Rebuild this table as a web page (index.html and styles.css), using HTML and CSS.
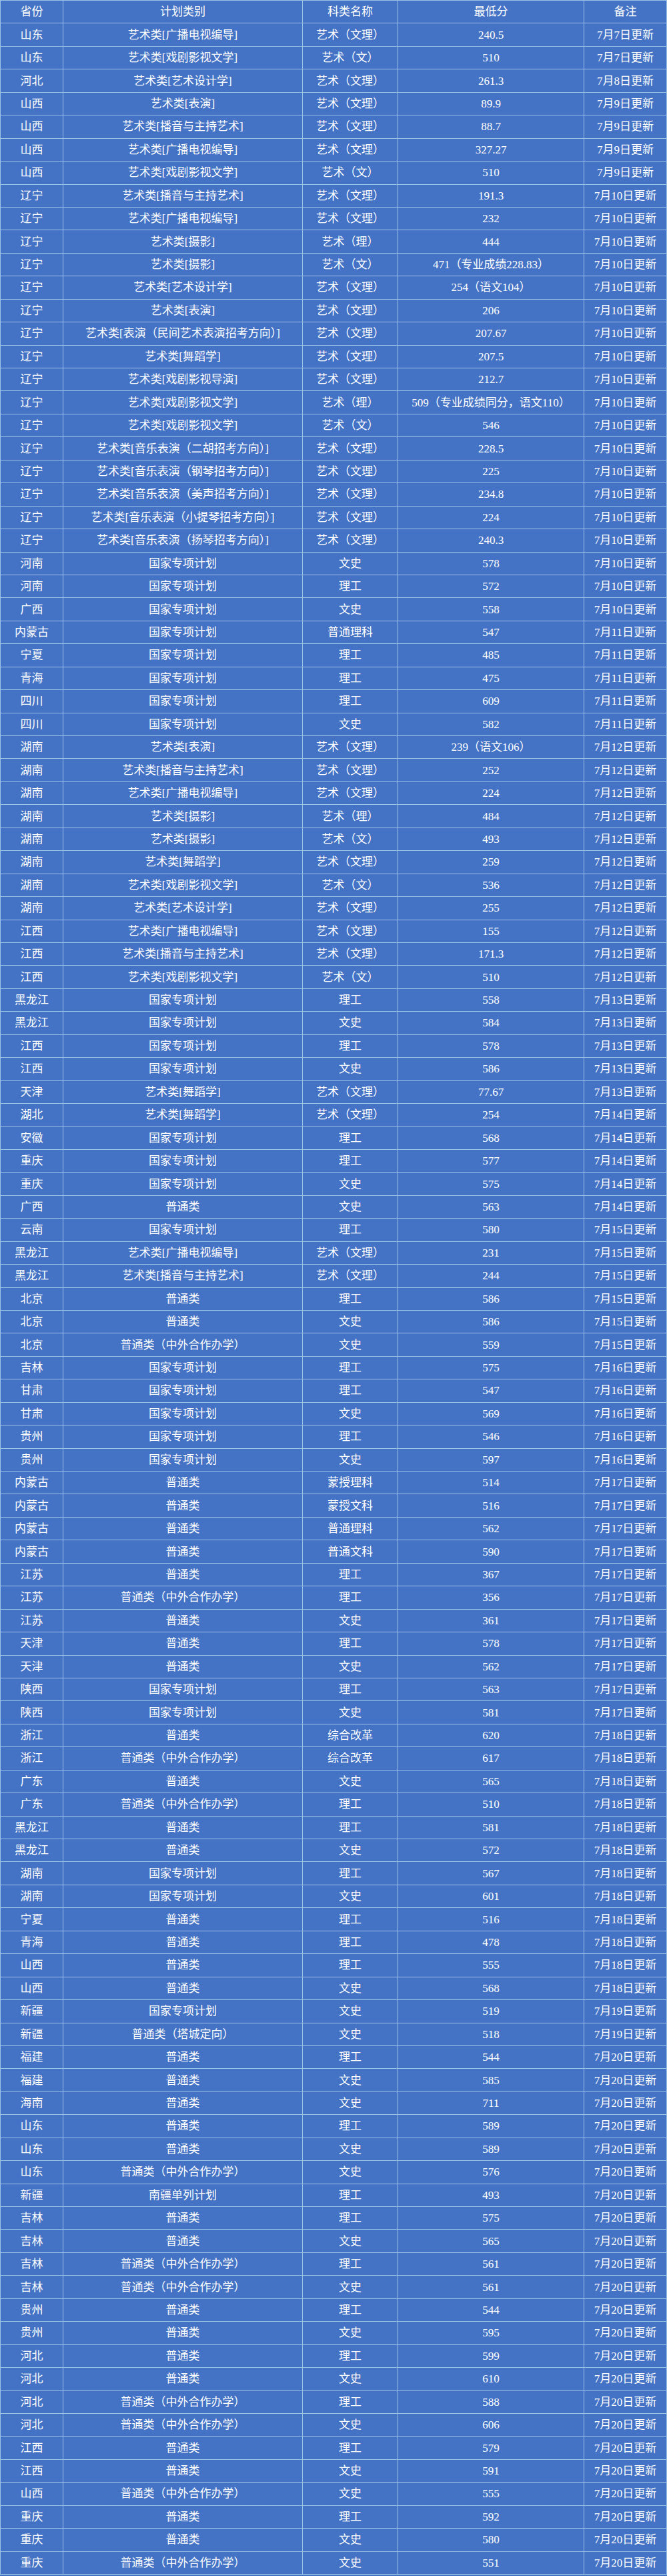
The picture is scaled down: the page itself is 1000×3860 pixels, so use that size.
FILE: index.html
```html
<!DOCTYPE html>
<html lang="zh-CN">
<head>
<meta charset="utf-8">
<title>录取分数线</title>
<link rel="stylesheet" href="styles.css">
</head>
<body>
<table class="scores">
<colgroup>
<col class="c-prov"><col class="c-plan"><col class="c-kind"><col class="c-min"><col class="c-note">
</colgroup>
<thead>
<tr><th>省份</th><th>计划类别</th><th>科类名称</th><th>最低分</th><th>备注</th></tr>
</thead>
<tbody>
<tr><td>山东</td><td>艺术类[广播电视编导]</td><td>艺术（文理）</td><td>240.5</td><td>7月7日更新</td></tr>
<tr><td>山东</td><td>艺术类[戏剧影视文学]</td><td>艺术（文）</td><td>510</td><td>7月7日更新</td></tr>
<tr><td>河北</td><td>艺术类[艺术设计学]</td><td>艺术（文理）</td><td>261.3</td><td>7月8日更新</td></tr>
<tr><td>山西</td><td>艺术类[表演]</td><td>艺术（文理）</td><td>89.9</td><td>7月9日更新</td></tr>
<tr><td>山西</td><td>艺术类[播音与主持艺术]</td><td>艺术（文理）</td><td>88.7</td><td>7月9日更新</td></tr>
<tr><td>山西</td><td>艺术类[广播电视编导]</td><td>艺术（文理）</td><td>327.27</td><td>7月9日更新</td></tr>
<tr><td>山西</td><td>艺术类[戏剧影视文学]</td><td>艺术（文）</td><td>510</td><td>7月9日更新</td></tr>
<tr><td>辽宁</td><td>艺术类[播音与主持艺术]</td><td>艺术（文理）</td><td>191.3</td><td>7月10日更新</td></tr>
<tr><td>辽宁</td><td>艺术类[广播电视编导]</td><td>艺术（文理）</td><td>232</td><td>7月10日更新</td></tr>
<tr><td>辽宁</td><td>艺术类[摄影]</td><td>艺术（理）</td><td>444</td><td>7月10日更新</td></tr>
<tr><td>辽宁</td><td>艺术类[摄影]</td><td>艺术（文）</td><td>471（专业成绩228.83）</td><td>7月10日更新</td></tr>
<tr><td>辽宁</td><td>艺术类[艺术设计学]</td><td>艺术（文理）</td><td>254（语文104）</td><td>7月10日更新</td></tr>
<tr><td>辽宁</td><td>艺术类[表演]</td><td>艺术（文理）</td><td>206</td><td>7月10日更新</td></tr>
<tr><td>辽宁</td><td>艺术类[表演（民间艺术表演招考方向）]</td><td>艺术（文理）</td><td>207.67</td><td>7月10日更新</td></tr>
<tr><td>辽宁</td><td>艺术类[舞蹈学]</td><td>艺术（文理）</td><td>207.5</td><td>7月10日更新</td></tr>
<tr><td>辽宁</td><td>艺术类[戏剧影视导演]</td><td>艺术（文理）</td><td>212.7</td><td>7月10日更新</td></tr>
<tr><td>辽宁</td><td>艺术类[戏剧影视文学]</td><td>艺术（理）</td><td>509（专业成绩同分，语文110）</td><td>7月10日更新</td></tr>
<tr><td>辽宁</td><td>艺术类[戏剧影视文学]</td><td>艺术（文）</td><td>546</td><td>7月10日更新</td></tr>
<tr><td>辽宁</td><td>艺术类[音乐表演（二胡招考方向）]</td><td>艺术（文理）</td><td>228.5</td><td>7月10日更新</td></tr>
<tr><td>辽宁</td><td>艺术类[音乐表演（钢琴招考方向）]</td><td>艺术（文理）</td><td>225</td><td>7月10日更新</td></tr>
<tr><td>辽宁</td><td>艺术类[音乐表演（美声招考方向）]</td><td>艺术（文理）</td><td>234.8</td><td>7月10日更新</td></tr>
<tr><td>辽宁</td><td>艺术类[音乐表演（小提琴招考方向）]</td><td>艺术（文理）</td><td>224</td><td>7月10日更新</td></tr>
<tr><td>辽宁</td><td>艺术类[音乐表演（扬琴招考方向）]</td><td>艺术（文理）</td><td>240.3</td><td>7月10日更新</td></tr>
<tr><td>河南</td><td>国家专项计划</td><td>文史</td><td>578</td><td>7月10日更新</td></tr>
<tr><td>河南</td><td>国家专项计划</td><td>理工</td><td>572</td><td>7月10日更新</td></tr>
<tr><td>广西</td><td>国家专项计划</td><td>文史</td><td>558</td><td>7月10日更新</td></tr>
<tr><td>内蒙古</td><td>国家专项计划</td><td>普通理科</td><td>547</td><td>7月11日更新</td></tr>
<tr><td>宁夏</td><td>国家专项计划</td><td>理工</td><td>485</td><td>7月11日更新</td></tr>
<tr><td>青海</td><td>国家专项计划</td><td>理工</td><td>475</td><td>7月11日更新</td></tr>
<tr><td>四川</td><td>国家专项计划</td><td>理工</td><td>609</td><td>7月11日更新</td></tr>
<tr><td>四川</td><td>国家专项计划</td><td>文史</td><td>582</td><td>7月11日更新</td></tr>
<tr><td>湖南</td><td>艺术类[表演]</td><td>艺术（文理）</td><td>239（语文106）</td><td>7月12日更新</td></tr>
<tr><td>湖南</td><td>艺术类[播音与主持艺术]</td><td>艺术（文理）</td><td>252</td><td>7月12日更新</td></tr>
<tr><td>湖南</td><td>艺术类[广播电视编导]</td><td>艺术（文理）</td><td>224</td><td>7月12日更新</td></tr>
<tr><td>湖南</td><td>艺术类[摄影]</td><td>艺术（理）</td><td>484</td><td>7月12日更新</td></tr>
<tr><td>湖南</td><td>艺术类[摄影]</td><td>艺术（文）</td><td>493</td><td>7月12日更新</td></tr>
<tr><td>湖南</td><td>艺术类[舞蹈学]</td><td>艺术（文理）</td><td>259</td><td>7月12日更新</td></tr>
<tr><td>湖南</td><td>艺术类[戏剧影视文学]</td><td>艺术（文）</td><td>536</td><td>7月12日更新</td></tr>
<tr><td>湖南</td><td>艺术类[艺术设计学]</td><td>艺术（文理）</td><td>255</td><td>7月12日更新</td></tr>
<tr><td>江西</td><td>艺术类[广播电视编导]</td><td>艺术（文理）</td><td>155</td><td>7月12日更新</td></tr>
<tr><td>江西</td><td>艺术类[播音与主持艺术]</td><td>艺术（文理）</td><td>171.3</td><td>7月12日更新</td></tr>
<tr><td>江西</td><td>艺术类[戏剧影视文学]</td><td>艺术（文）</td><td>510</td><td>7月12日更新</td></tr>
<tr><td>黑龙江</td><td>国家专项计划</td><td>理工</td><td>558</td><td>7月13日更新</td></tr>
<tr><td>黑龙江</td><td>国家专项计划</td><td>文史</td><td>584</td><td>7月13日更新</td></tr>
<tr><td>江西</td><td>国家专项计划</td><td>理工</td><td>578</td><td>7月13日更新</td></tr>
<tr><td>江西</td><td>国家专项计划</td><td>文史</td><td>586</td><td>7月13日更新</td></tr>
<tr><td>天津</td><td>艺术类[舞蹈学]</td><td>艺术（文理）</td><td>77.67</td><td>7月13日更新</td></tr>
<tr><td>湖北</td><td>艺术类[舞蹈学]</td><td>艺术（文理）</td><td>254</td><td>7月14日更新</td></tr>
<tr><td>安徽</td><td>国家专项计划</td><td>理工</td><td>568</td><td>7月14日更新</td></tr>
<tr><td>重庆</td><td>国家专项计划</td><td>理工</td><td>577</td><td>7月14日更新</td></tr>
<tr><td>重庆</td><td>国家专项计划</td><td>文史</td><td>575</td><td>7月14日更新</td></tr>
<tr><td>广西</td><td>普通类</td><td>文史</td><td>563</td><td>7月14日更新</td></tr>
<tr><td>云南</td><td>国家专项计划</td><td>理工</td><td>580</td><td>7月15日更新</td></tr>
<tr><td>黑龙江</td><td>艺术类[广播电视编导]</td><td>艺术（文理）</td><td>231</td><td>7月15日更新</td></tr>
<tr><td>黑龙江</td><td>艺术类[播音与主持艺术]</td><td>艺术（文理）</td><td>244</td><td>7月15日更新</td></tr>
<tr><td>北京</td><td>普通类</td><td>理工</td><td>586</td><td>7月15日更新</td></tr>
<tr><td>北京</td><td>普通类</td><td>文史</td><td>586</td><td>7月15日更新</td></tr>
<tr><td>北京</td><td>普通类（中外合作办学）</td><td>文史</td><td>559</td><td>7月15日更新</td></tr>
<tr><td>吉林</td><td>国家专项计划</td><td>理工</td><td>575</td><td>7月16日更新</td></tr>
<tr><td>甘肃</td><td>国家专项计划</td><td>理工</td><td>547</td><td>7月16日更新</td></tr>
<tr><td>甘肃</td><td>国家专项计划</td><td>文史</td><td>569</td><td>7月16日更新</td></tr>
<tr><td>贵州</td><td>国家专项计划</td><td>理工</td><td>546</td><td>7月16日更新</td></tr>
<tr><td>贵州</td><td>国家专项计划</td><td>文史</td><td>597</td><td>7月16日更新</td></tr>
<tr><td>内蒙古</td><td>普通类</td><td>蒙授理科</td><td>514</td><td>7月17日更新</td></tr>
<tr><td>内蒙古</td><td>普通类</td><td>蒙授文科</td><td>516</td><td>7月17日更新</td></tr>
<tr><td>内蒙古</td><td>普通类</td><td>普通理科</td><td>562</td><td>7月17日更新</td></tr>
<tr><td>内蒙古</td><td>普通类</td><td>普通文科</td><td>590</td><td>7月17日更新</td></tr>
<tr><td>江苏</td><td>普通类</td><td>理工</td><td>367</td><td>7月17日更新</td></tr>
<tr><td>江苏</td><td>普通类（中外合作办学）</td><td>理工</td><td>356</td><td>7月17日更新</td></tr>
<tr><td>江苏</td><td>普通类</td><td>文史</td><td>361</td><td>7月17日更新</td></tr>
<tr><td>天津</td><td>普通类</td><td>理工</td><td>578</td><td>7月17日更新</td></tr>
<tr><td>天津</td><td>普通类</td><td>文史</td><td>562</td><td>7月17日更新</td></tr>
<tr><td>陕西</td><td>国家专项计划</td><td>理工</td><td>563</td><td>7月17日更新</td></tr>
<tr><td>陕西</td><td>国家专项计划</td><td>文史</td><td>581</td><td>7月17日更新</td></tr>
<tr><td>浙江</td><td>普通类</td><td>综合改革</td><td>620</td><td>7月18日更新</td></tr>
<tr><td>浙江</td><td>普通类（中外合作办学）</td><td>综合改革</td><td>617</td><td>7月18日更新</td></tr>
<tr><td>广东</td><td>普通类</td><td>文史</td><td>565</td><td>7月18日更新</td></tr>
<tr><td>广东</td><td>普通类（中外合作办学）</td><td>理工</td><td>510</td><td>7月18日更新</td></tr>
<tr><td>黑龙江</td><td>普通类</td><td>理工</td><td>581</td><td>7月18日更新</td></tr>
<tr><td>黑龙江</td><td>普通类</td><td>文史</td><td>572</td><td>7月18日更新</td></tr>
<tr><td>湖南</td><td>国家专项计划</td><td>理工</td><td>567</td><td>7月18日更新</td></tr>
<tr><td>湖南</td><td>国家专项计划</td><td>文史</td><td>601</td><td>7月18日更新</td></tr>
<tr><td>宁夏</td><td>普通类</td><td>理工</td><td>516</td><td>7月18日更新</td></tr>
<tr><td>青海</td><td>普通类</td><td>理工</td><td>478</td><td>7月18日更新</td></tr>
<tr><td>山西</td><td>普通类</td><td>理工</td><td>555</td><td>7月18日更新</td></tr>
<tr><td>山西</td><td>普通类</td><td>文史</td><td>568</td><td>7月18日更新</td></tr>
<tr><td>新疆</td><td>国家专项计划</td><td>文史</td><td>519</td><td>7月19日更新</td></tr>
<tr><td>新疆</td><td>普通类（塔城定向）</td><td>文史</td><td>518</td><td>7月19日更新</td></tr>
<tr><td>福建</td><td>普通类</td><td>理工</td><td>544</td><td>7月20日更新</td></tr>
<tr><td>福建</td><td>普通类</td><td>文史</td><td>585</td><td>7月20日更新</td></tr>
<tr><td>海南</td><td>普通类</td><td>文史</td><td>711</td><td>7月20日更新</td></tr>
<tr><td>山东</td><td>普通类</td><td>理工</td><td>589</td><td>7月20日更新</td></tr>
<tr><td>山东</td><td>普通类</td><td>文史</td><td>589</td><td>7月20日更新</td></tr>
<tr><td>山东</td><td>普通类（中外合作办学）</td><td>文史</td><td>576</td><td>7月20日更新</td></tr>
<tr><td>新疆</td><td>南疆单列计划</td><td>理工</td><td>493</td><td>7月20日更新</td></tr>
<tr><td>吉林</td><td>普通类</td><td>理工</td><td>575</td><td>7月20日更新</td></tr>
<tr><td>吉林</td><td>普通类</td><td>文史</td><td>565</td><td>7月20日更新</td></tr>
<tr><td>吉林</td><td>普通类（中外合作办学）</td><td>理工</td><td>561</td><td>7月20日更新</td></tr>
<tr><td>吉林</td><td>普通类（中外合作办学）</td><td>文史</td><td>561</td><td>7月20日更新</td></tr>
<tr><td>贵州</td><td>普通类</td><td>理工</td><td>544</td><td>7月20日更新</td></tr>
<tr><td>贵州</td><td>普通类</td><td>文史</td><td>595</td><td>7月20日更新</td></tr>
<tr><td>河北</td><td>普通类</td><td>理工</td><td>599</td><td>7月20日更新</td></tr>
<tr><td>河北</td><td>普通类</td><td>文史</td><td>610</td><td>7月20日更新</td></tr>
<tr><td>河北</td><td>普通类（中外合作办学）</td><td>理工</td><td>588</td><td>7月20日更新</td></tr>
<tr><td>河北</td><td>普通类（中外合作办学）</td><td>文史</td><td>606</td><td>7月20日更新</td></tr>
<tr><td>江西</td><td>普通类</td><td>理工</td><td>579</td><td>7月20日更新</td></tr>
<tr><td>江西</td><td>普通类</td><td>文史</td><td>591</td><td>7月20日更新</td></tr>
<tr><td>山西</td><td>普通类（中外合作办学）</td><td>文史</td><td>555</td><td>7月20日更新</td></tr>
<tr><td>重庆</td><td>普通类</td><td>理工</td><td>592</td><td>7月20日更新</td></tr>
<tr><td>重庆</td><td>普通类</td><td>文史</td><td>580</td><td>7月20日更新</td></tr>
<tr><td>重庆</td><td>普通类（中外合作办学）</td><td>文史</td><td>551</td><td>7月20日更新</td></tr>
</tbody>
</table>
</body>
</html>
```
FILE: styles.css
```css
html, body {
  margin: 0;
  padding: 0;
  background: #4472c4;
}

.scores {
  width: 1000px;
  table-layout: fixed;
  border-collapse: separate;
  border-spacing: 1px;
  background: #9dc3e6;
  font-family: "Liberation Serif", "Noto Sans CJK SC", serif;
  font-size: 17px;
  color: #ffffff;
}

.c-prov { width: 93px; }
.c-plan { width: 358px; }
.c-kind { width: 142px; }
.c-min  { width: 278px; }
.c-note { width: 123px; }

.scores th,
.scores td {
  height: 33.45px;
  padding: 0;
  background: #4472c4;
  text-align: center;
  vertical-align: middle;
  font-weight: normal;
  white-space: nowrap;
  line-height: 1;
}
```
